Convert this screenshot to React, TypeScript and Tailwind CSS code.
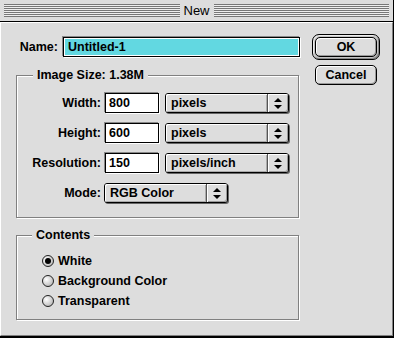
import React from 'react';

const Arrows: React.FC = () => (
  <svg width="8" height="11" viewBox="0 0 8 11">
    <path d="M4 0 L8 4 L0 4 Z" fill="#000" />
    <path d="M0 7 L8 7 L4 11 Z" fill="#000" />
  </svg>
);

const Popup: React.FC<{ label: string; width: string }> = ({ label, width }) => (
  <div className={`${width} h-[20px] flex rounded-[3px] border border-black bg-[#dddddd] shadow-[1px_1px_0_#666]`}>
    <div className="flex-1 flex items-center pl-[5px] rounded-l-[2px] shadow-[inset_1px_1px_0_#fff,inset_-1px_-1px_0_#aaa]">
      {label}
    </div>
    <div className="w-[21px] flex items-center justify-center border-l border-[#555] rounded-r-[2px] shadow-[inset_1px_1px_0_#fff,inset_-1px_-1px_0_#999]">
      <Arrows />
    </div>
  </div>
);

const Field: React.FC<{ value: string }> = ({ value }) => (
  <div className="w-[54px] h-[20px] flex items-center pl-[3px] border border-black bg-white shadow-[-1px_-1px_0_#888,1px_1px_0_#fff]">
    {value}
  </div>
);

const Radio: React.FC<{ label: string; checked?: boolean }> = ({ label, checked }) => (
  <div className="h-[20px] flex items-center gap-[4px]">
    <div className="w-[12px] h-[12px] rounded-full border border-[#222] bg-[radial-gradient(circle_at_35%_35%,#ffffff,#a8a8a8)] flex items-center justify-center">
      {checked && <div className="w-[6px] h-[6px] rounded-full bg-black" />}
    </div>
    <span>{label}</span>
  </div>
);

const rows = [
  { label: 'Width:', value: '800', unit: 'pixels' },
  { label: 'Height:', value: '600', unit: 'pixels' },
  { label: 'Resolution:', value: '150', unit: 'pixels/inch' },
];

export default function App() {
  return (
    <div className="w-[394px] h-[338px] flex flex-col bg-[#dddddd] border-r border-b-2 border-black text-black text-[12.5px] font-bold leading-[16px] font-['Liberation_Sans',Arial,sans-serif]">
      {/* title bar */}
      <div className="h-[22px] shrink-0 flex items-center px-[4px] border-b border-black">
        <div className="flex-1 h-[13px] bg-[repeating-linear-gradient(to_bottom,#777_0px,#777_1px,#eeeeee_1px,#eeeeee_2px)]" />
        <div className="px-[4px] text-[13px] font-normal">New</div>
        <div className="flex-1 h-[13px] bg-[repeating-linear-gradient(to_bottom,#777_0px,#777_1px,#eeeeee_1px,#eeeeee_2px)]" />
      </div>

      {/* body */}
      <div className="flex-1 flex border-t border-l border-t-white border-l-white border-r border-b border-r-[#808080] border-b-[#808080] pl-[15px] pt-[14px]">
        <div className="w-[284px] flex flex-col">
          <div className="h-[20px] flex items-center">
            <div className="w-[47px] text-right pr-[5px]">Name:</div>
            <div className="flex-1 h-[20px] border border-black bg-[#62d8e1] shadow-[inset_0_0_0_1px_#fff,-1px_-1px_0_#888,1px_1px_0_#fff] flex items-center pl-[4px]">
              Untitled-1
            </div>
          </div>

          <fieldset className="mt-[10px] w-[283px] border border-[#808080] shadow-[inset_1px_1px_0_#fff,1px_1px_0_#fff] pt-[10px] pb-[14px]">
            <legend className="ml-[16px] px-[4px] bg-[#dddddd]">Image Size: 1.38M</legend>
            <div className="flex flex-col gap-[10px]">
              {rows.map((r) => (
                <div key={r.label} className="h-[20px] flex items-center">
                  <div className="w-[84px] text-right">{r.label}</div>
                  <div className="ml-[4px]">
                    <Field value={r.value} />
                  </div>
                  <div className="ml-[6px]">
                    <Popup label={r.unit} width="w-[124px]" />
                  </div>
                </div>
              ))}
              <div className="h-[20px] flex items-center">
                <div className="w-[84px] text-right">Mode:</div>
                <div className="ml-[3px]">
                  <Popup label="RGB Color" width="w-[124px]" />
                </div>
              </div>
            </div>
          </fieldset>

          <fieldset className="mt-[9px] w-[283px] border border-[#808080] shadow-[inset_1px_1px_0_#fff,1px_1px_0_#fff] pt-[8px] pb-[8px]">
            <legend className="ml-[15px] px-[4px] bg-[#dddddd]">Contents</legend>
            <div className="pl-[25px]">
              <Radio label="White" checked />
              <Radio label="Background Color" />
              <Radio label="Transparent" />
            </div>
          </fieldset>
        </div>

        <div className="ml-[12px] flex flex-col items-center w-[68px] -mt-[3px]">
          <div className="w-[68px] h-[26px] p-[2px] rounded-[7px] border border-black bg-[#c4c4c4] shadow-[inset_1px_1px_0_#eee,inset_-1px_-1px_0_#888]">
            <div className="w-full h-full flex items-center justify-center rounded-[5px] border border-black bg-[#dddddd] shadow-[inset_1px_1px_0_#fff,inset_-1px_-1px_0_#999]">
              OK
            </div>
          </div>
          <div className="mt-[5px] w-[62px] h-[20px] flex items-center justify-center rounded-[5px] border border-black bg-[#dddddd] shadow-[inset_1px_1px_0_#fff,inset_-1px_-1px_0_#999]">
            Cancel
          </div>
        </div>
      </div>
    </div>
  );
}
